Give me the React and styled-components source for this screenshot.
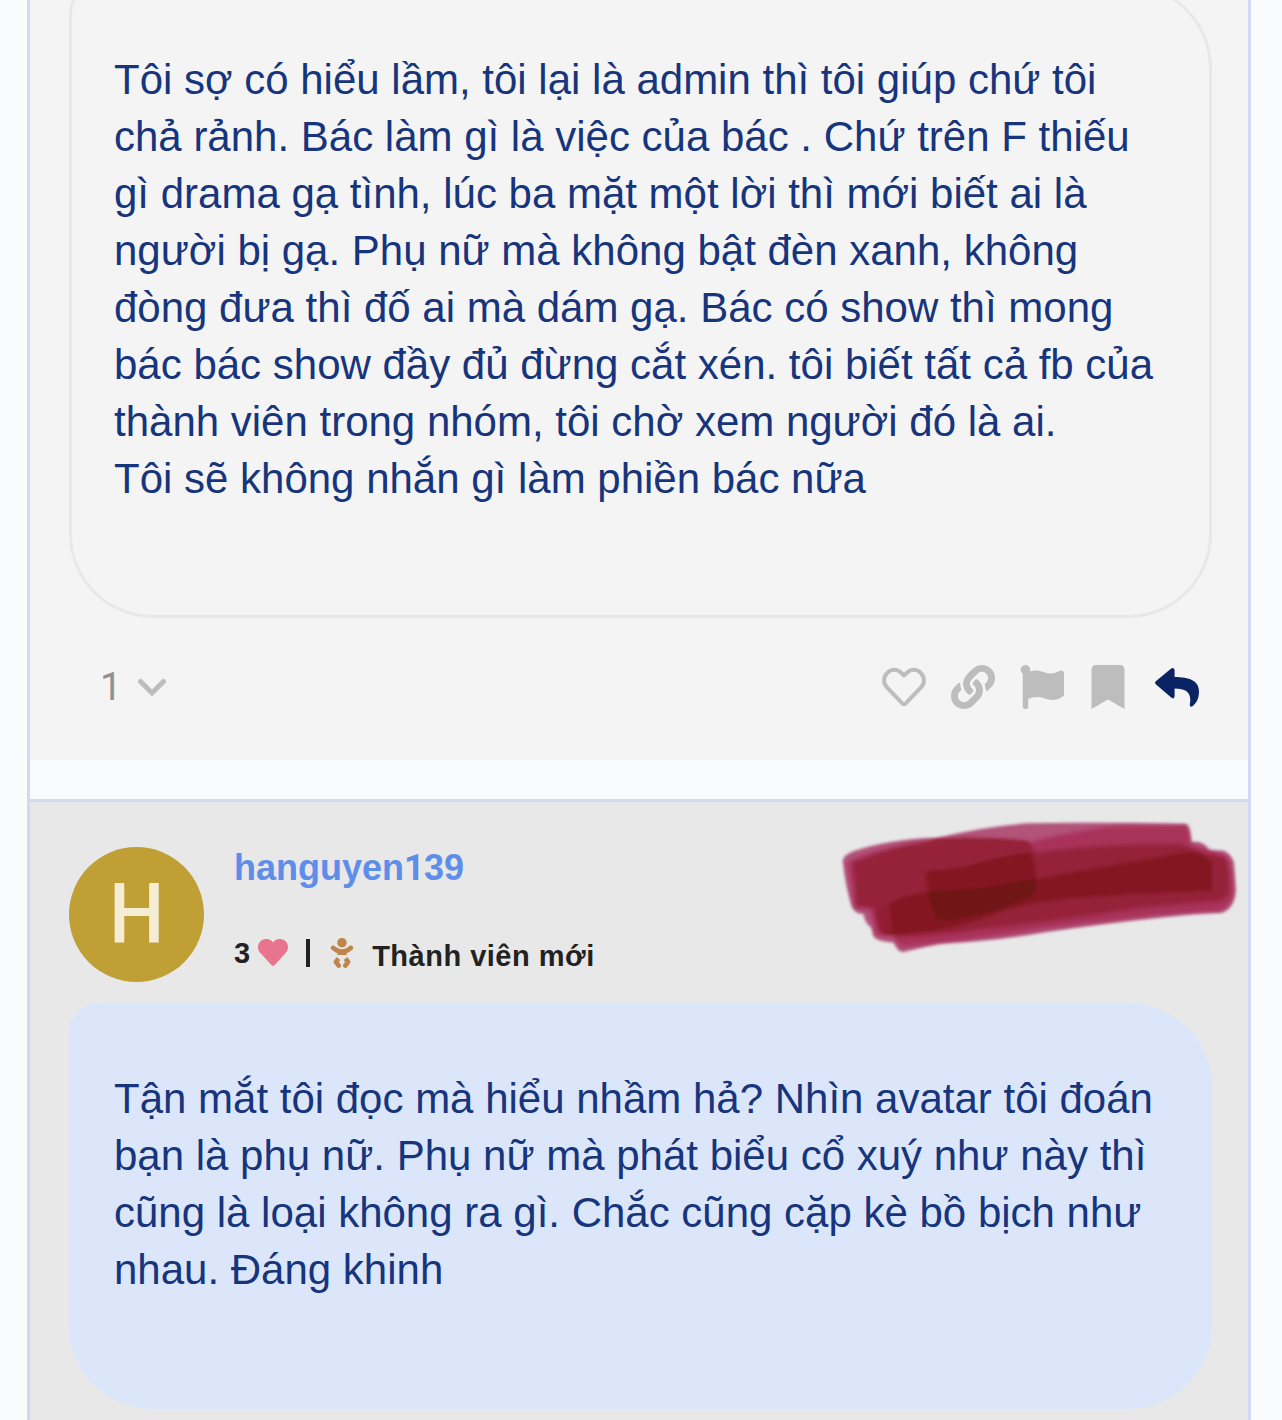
import React from "react";
import styled, { createGlobalStyle } from "styled-components";
import { FaBaby, FaBookmark, FaFlag, FaLink } from "react-icons/fa";

const Global = createGlobalStyle`
  * { box-sizing: border-box; }
  body { margin: 0; background: #fafbfd; font-family: "Liberation Sans", Arial, sans-serif; }
`;

const Page = styled.main`
  height: 1420px;
  padding: 0 31px 0 27px;
  overflow: hidden;
`;

const Topic = styled.div`
  height: 100%;
  border: solid #d1daf2;
  border-width: 0 3px;
  overflow: hidden;
`;

const Post = styled.article`
  display: flow-root;
  position: relative;
  padding: 0 36px 0 39px;
  background: ${(p) => (p.$highlighted ? "#e8e8e8" : "#f4f4f4")};
  height: ${(p) => p.$height}px;
  border-top: ${(p) => (p.$highlighted ? "3px solid #d1daf2" : "0")};
  margin-top: ${(p) => (p.$highlighted ? 39 : 0)}px;
`;

const Bubble = styled.section`
  margin-top: ${(p) => p.$offset}px;
  padding: 64px 0 108px 42px;
  border: 3px solid ${(p) => (p.$tinted ? "#dce6fa" : "#e8e8e8")};
  border-radius: 30px 84px 84px 84px;
  background: ${(p) => (p.$tinted ? "#dce6fa" : "#f4f4f4")};
`;

const Line = styled.p`
  margin: 0;
  font-size: 42px;
  line-height: 57px;
  color: #17357d;
  white-space: nowrap;
`;

const Footer = styled.footer`
  display: flex;
  align-items: center;
  justify-content: space-between;
  height: 44px;
  margin-top: 47px;
  padding: 0 13px 0 31px;
`;

const Replies = styled.button`
  display: flex;
  align-items: center;
  gap: 15px;
  padding: 0;
  border: 0;
  background: none;
  color: #919191;
  font: 39px/44px Roboto, sans-serif;
`;

const Actions = styled.div`
  display: flex;
  align-items: center;
  color: #bdbdbd;
`;

const Action = styled.span`
  display: flex;
  justify-content: center;
  width: ${(p) => p.$width ?? 44}px;
  margin-left: ${(p) => p.$gap ?? 25}px;
  color: ${(p) => (p.$primary ? "#0a2463" : "inherit")};
  svg { display: block; flex: none; }
`;

const Header = styled.header`
  display: flex;
  gap: 30px;
  margin-top: 45px;
  height: 135px;
`;

const Avatar = styled.div`
  width: 135px;
  height: 135px;
  border-radius: 50%;
  background: #c09f35;
  color: #f4ecd3;
  font: 500 84px/136px Roboto, sans-serif;
  text-align: center;
`;

const Initial = styled.span`
  display: inline-block;
  transform: scaleX(0.93);
`;

const Identity = styled.div`
  display: flex;
  flex-direction: column;
`;

const UserName = styled.strong`
  font-size: 36px;
  line-height: 42px;
  color: #5e8eea;
`;

const PlainOne = styled.span`
  display: inline-block;
  width: 0.556em;
  font-family: Roboto, sans-serif;
  text-align: center;
`;

const Meta = styled.div`
  display: flex;
  align-items: center;
  margin-top: 43px;
  height: 42px;
  color: #222;
  font-size: 29px;
  font-weight: 700;
  svg { display: block; }
`;

const Divider = styled.span`
  width: 4px;
  height: 28px;
  margin: 0 17px 0 18px;
  background: #222;
`;

const Rank = styled.span`
  margin: 7px 0 0 15px;
  letter-spacing: 0.5px;
  white-space: nowrap;
`;

const Scribble = styled.svg`
  position: absolute;
  top: 18px;
  right: 8px;
`;

const OutlineHeart = () => (
  <svg width="44" height="44" viewBox="0 0 44 44" fill="none" stroke="currentColor" strokeWidth="4" strokeLinejoin="round">
    <path d="M22 10.5 L19.2 7.8 C15.2 3.8 9.2 3.8 5.3 7.8 C1 12.2 1 18.5 5.2 22.7 L20.3 38.4 Q22 40.2 23.7 38.4 L38.8 22.7 C43 18.5 43 12.2 38.7 7.8 C34.8 3.8 28.8 3.8 24.8 7.8 Z" />
  </svg>
);

const Reply = () => (
  <svg width="44" height="44" viewBox="0 0 44 44" fill="currentColor">
    <path d="M0.8 16.2 L16.2 3.4 Q19.6 1.8 19.6 5.6 V12 C34 12 44 15.5 44 26.5 C44 33.5 41.5 38 37.5 41.2 Q34.8 42.6 34.8 39.4 C37 28 31.5 23.6 19.6 23.6 V31 Q19.4 34.8 16.2 32.6 L0.8 19.2 Q-0.7 17.7 0.8 16.2Z" />
  </svg>
);

const Chevron = () => (
  <svg width="30" height="20" viewBox="0 0 30 20" fill="none" stroke="#bdbdbd" strokeWidth="5" strokeLinecap="round">
    <path d="M3.5 4.5 L15 16 L26.5 4.5" />
  </svg>
);

const Heart = () => (
  <svg width="30" height="28" viewBox="0 0 30 28" fill="#e9748e">
    <path d="M15 3.4 L14 2.3 C10.8 -.8 5.7 -.8 2.5 2.3 C-.8 5.6 -.8 10.7 2.4 14 L13.6 26.2 Q15 27.5 16.4 26.2 L27.6 14 C30.8 10.7 30.8 5.6 27.5 2.3 C24.3 -.8 19.2 -.8 16 2.3 Z" />
  </svg>
);

const MarkerStrokes = () => (
  <Scribble width="400" height="135" viewBox="60 60 1200 405">
    <defs>
      <filter id="edge" x="-5%" y="-5%" width="110%" height="110%">
        <feGaussianBlur stdDeviation="4" />
      </filter>
      <filter id="wash" x="-5%" y="-10%" width="110%" height="120%">
        <feGaussianBlur stdDeviation="7" />
      </filter>
    </defs>
    <g filter="url(#edge)">
      <path fill="#b2527a" d="M68 184 Q70 165 100 154 Q210 116 350 114 Q480 82 620 70 Q830 66 1095 72 Q1110 75 1114 126 Q1155 122 1166 152 L1210 152 Q1233 160 1242 188 L1247 270 Q1243 326 1205 338 Q1130 340 1040 350 Q850 370 680 396 Q520 424 358 430 L250 456 Q232 455 222 428 Q170 425 160 408 L155 384 Q134 370 130 342 Q103 342 94 315 Q77 260 68 184Z" />
    </g>
    <g filter="url(#wash)">
      <path fill="#a9325a" d="M82 186 Q190 135 350 120 L630 126 Q770 90 900 78 L1103 77 L1110 132 L1154 146 L1210 164 Q1238 175 1240 280 Q1235 320 1200 332 Q1030 338 680 385 Q450 420 246 442 Q230 430 222 412 L168 405 L150 330 L104 325Z" />
      <path fill="#952238" d="M100 187 Q250 124 430 115 Q560 118 620 126 L645 158 Q850 130 1085 133 L1150 158 L1215 172 Q1230 190 1226 285 L1205 302 Q1070 310 950 325 Q660 370 500 385 Q360 408 226 412 L215 400 L180 396 L160 325 L110 318Z" />
    </g>
    <g filter="url(#edge)">
      <path fill="#952238" d="M350 118 Q500 113 620 124 Q636 132 640 158 L560 180 L330 212 L200 180Z" />
      <path fill="#841920" d="M316 226 Q320 211 346 211 Q430 205 470 190 Q550 166 632 156 Q646 180 650 238 Q790 208 920 188 Q1050 165 1110 154 Q1160 160 1176 190 L1176 272 Q990 278 820 290 Q650 300 560 330 Q480 362 400 382 Q300 404 194 402 Q182 380 172 338 L207 318 Q210 304 250 291 L326 272Z" />
      <path fill="#701414" d="M324 274 Q490 268 560 250 L650 236 Q655 270 632 290 Q525 340 430 354 Q365 368 350 353 Q334 330 324 274Z" />
      <path fill="#921f31" d="M172 335 L207 316 L217 394 L188 402Z" />
    </g>
  </Scribble>
);

const first = [
  "Tôi sợ có hiểu lầm, tôi lại là admin thì tôi giúp chứ tôi",
  "chả rảnh. Bác làm gì là việc của bác . Chứ trên F thiếu",
  "gì drama gạ tình, lúc ba mặt một lời thì mới biết ai là",
  "người bị gạ. Phụ nữ mà không bật đèn xanh, không",
  "đòng đưa thì đố ai mà dám gạ. Bác có show thì mong",
  "bác bác show đầy đủ đừng cắt xén. tôi biết tất cả fb của",
  "thành viên trong nhóm, tôi chờ xem người đó là ai.",
  "Tôi sẽ không nhắn gì làm phiền bác nữa",
];

const second = [
  "Tận mắt tôi đọc mà hiểu nhầm hả? Nhìn avatar tôi đoán",
  "bạn là phụ nữ. Phụ nữ mà phát biểu cổ xuý như này thì",
  "cũng là loại không ra gì. Chắc cũng cặp kè bồ bịch như",
  "nhau. Đáng khinh",
];

const Lines = ({ items }) => items.map((text) => <Line key={text}>{text}</Line>);

export default function App() {
  return (
    <Page>
      <Global />
      <Topic>
        <Post $height={760}>
          <Bubble $offset={-16}><Lines items={first} /></Bubble>
          <Footer>
            <Replies>1<Chevron /></Replies>
            <Actions>
              <Action><OutlineHeart /></Action>
              <Action><FaLink size={44} /></Action>
              <Action><FaFlag size={44} /></Action>
              <Action $width={34} $gap={27}><FaBookmark size={44} /></Action>
              <Action $gap={30} $primary><Reply /></Action>
            </Actions>
          </Footer>
        </Post>
        <Post $height={621} $highlighted>
          <Header>
            <Avatar><Initial>H</Initial></Avatar>
            <Identity>
              <UserName>hanguyen<PlainOne>1</PlainOne>39</UserName>
              <Meta>
                <span>3</span>
                <Action $width={30} $gap={8}><Heart /></Action>
                <Divider />
                <FaBaby size={30} color="#c0854a" />
                <Rank>Thành viên mới</Rank>
              </Meta>
            </Identity>
          </Header>
          <MarkerStrokes />
          <Bubble $offset={21} $tinted><Lines items={second} /></Bubble>
        </Post>
      </Topic>
    </Page>
  );
}
